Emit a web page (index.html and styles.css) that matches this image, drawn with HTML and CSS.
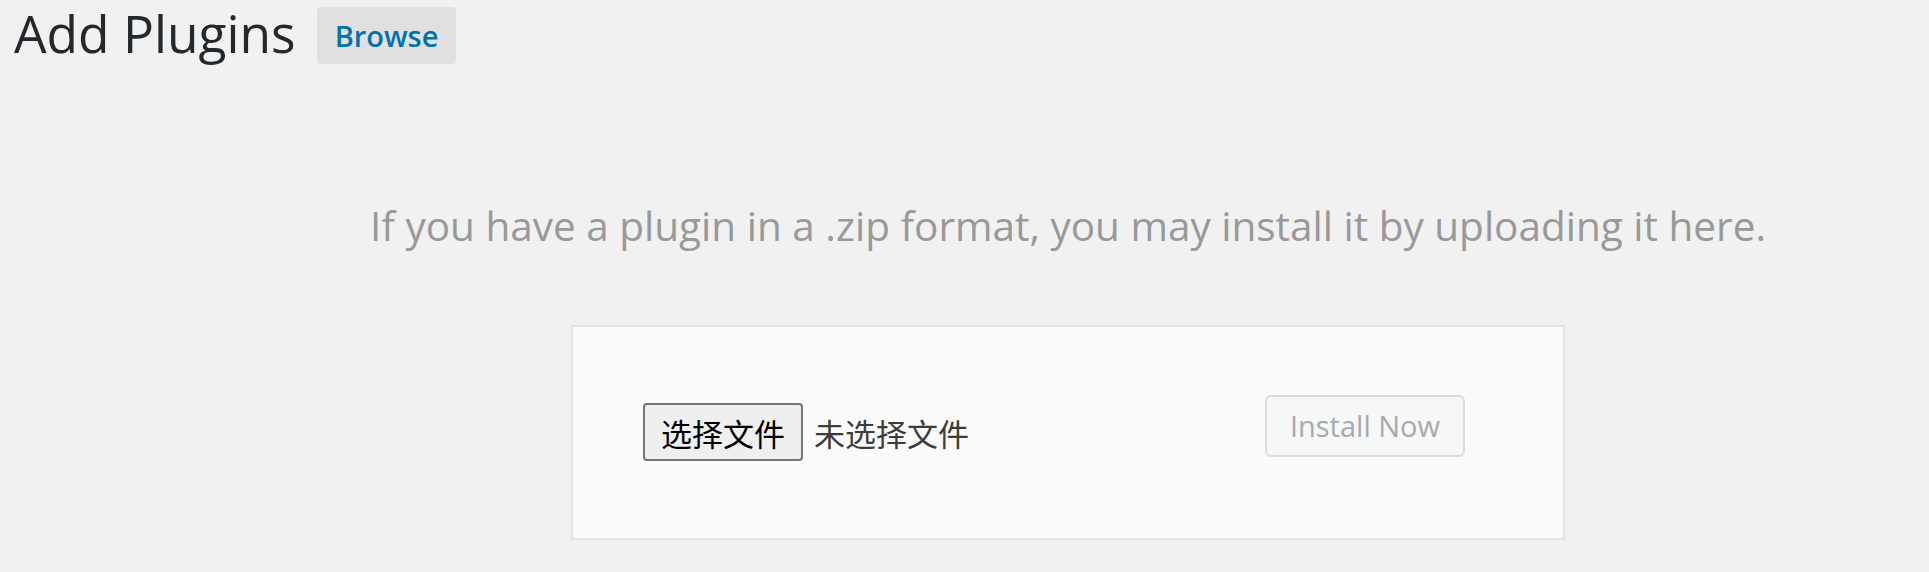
FILE: index.html
```html
<!DOCTYPE html>
<html lang="en">
<head>
  <meta charset="UTF-8">
  <title>Add Plugins</title>
  <link rel="stylesheet" href="styles.css">
</head>
<body>

<div class="wrap">
  <div class="page-header">
    <h1>Add Plugins</h1>
    <a class="page-title-action" href="#">Browse</a>
  </div>

  <div class="upload-plugin">
    <p class="install-help">If you have a plugin in a .zip format, you may install it by uploading it here.</p>

    <form class="upload-form" onsubmit="return false">
      <div class="file-field">
        <button type="button" class="file-btn">选择文件</button>
        <span class="file-name">未选择文件</span>
      </div>
      <button type="submit" class="install-btn" disabled>Install Now</button>
    </form>
  </div>
</div>

</body>
</html>
```

FILE: styles.css
```css
body {
  background-color: #f1f1f1;
  color: #23282d;
  margin: 0;
  font-family: "Open Sans", "Noto Sans", sans-serif;
  overflow: hidden;
}

.wrap {
  padding: 0 0 0 14px;
}

.page-header {
  display: flex;
  align-items: flex-start;
}

.page-header h1 {
  margin: 0;
  font-size: 51.5px;
  font-weight: 400;
  line-height: 66px;
  color: #23282d;
}

.page-title-action {
  margin: 7px 0 0 21px;
  padding: 0 18px;
  height: 57px;
  line-height: 57px;
  background: #e0e0e0;
  border-radius: 4px;
  color: #0073aa;
  font-size: 29px;
  font-weight: 600;
  text-decoration: none;
}

.upload-plugin {
  margin: 130px 0 0 356px;
  width: 1396px;
}

.install-help {
  margin: 0 -100px;
  text-align: center;
  white-space: nowrap;
  font-size: 40.5px;
  line-height: 1.5;
  color: #999999;
}

.upload-form {
  box-sizing: border-box;
  width: 994px;
  height: 215px;
  margin: 68px auto 0;
  padding: 0 98px 0 70px;
  background: #fafafa;
  border: 2px solid #e3e3e3;
  display: flex;
  align-items: center;
  justify-content: space-between;
}

.file-field {
  display: flex;
  align-items: center;
}

.file-btn {
  box-sizing: border-box;
  height: 58px;
  padding: 0 16px;
  background: #efefef;
  border: 2px solid #767676;
  border-radius: 4px;
  color: #000;
  font-family: "Noto Sans CJK SC", sans-serif;
  font-size: 31px;
  line-height: 1;
}

.file-name {
  margin-left: 11px;
  color: #3c3c3c;
  font-family: "Noto Sans CJK SC", sans-serif;
  font-size: 31px;
}

.install-btn {
  box-sizing: border-box;
  height: 62px;
  margin-bottom: 12px;
  padding: 0 23px;
  background: #f6f7f7;
  border: 2px solid #dcdcde;
  border-radius: 6px;
  color: #a7aaad;
  font-family: "Open Sans", sans-serif;
  font-size: 29px;
  line-height: 58px;
}
```
